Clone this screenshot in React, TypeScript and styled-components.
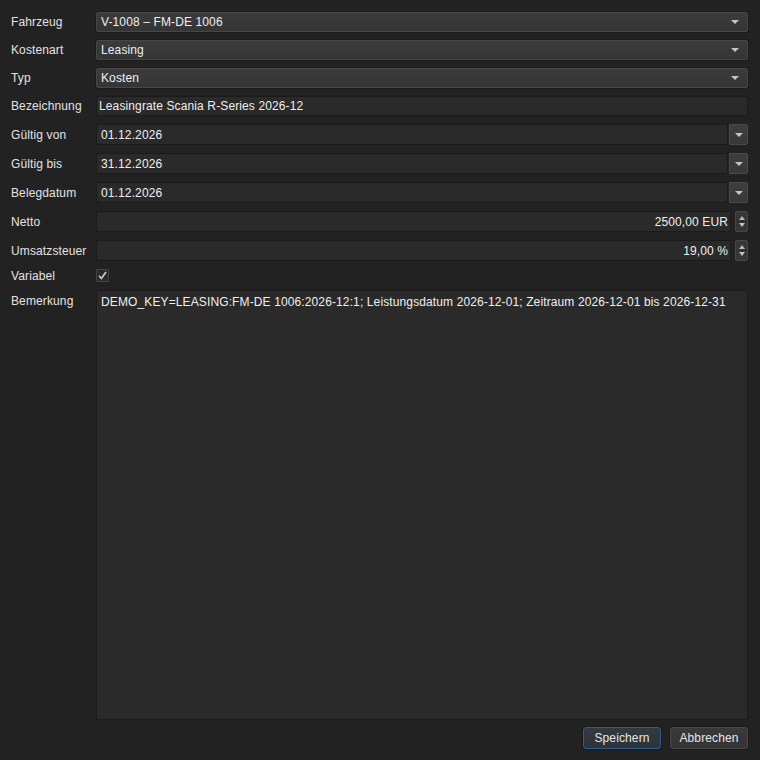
import * as React from 'react';
import styled, { createGlobalStyle, css } from 'styled-components';

const GlobalStyle = createGlobalStyle`
  html, body {
    margin: 0;
    padding: 0;
    background: #222222;
  }
  body {
    font-family: 'Liberation Sans', Arial, sans-serif;
    font-size: 12px;
    letter-spacing: 0.12px;
    color: #e4e4e4;
  }
`;

const Page = styled.div`
  box-sizing: border-box;
  width: 760px;
  height: 760px;
  padding: 12px 12px 11px 11px;
  display: flex;
  flex-direction: column;
  gap: 7px;
`;

const Form = styled.div`
  flex: 1;
  display: grid;
  grid-template-columns: 85px 1fr;
  grid-template-rows: 20px 20px 20px 20px 21px 21px 21px 21px 21px 13px 1fr;
  row-gap: 8px;
`;

const Label = styled.div<{ $top?: boolean }>`
  display: flex;
  align-items: ${p => (p.$top ? 'flex-start' : 'center')};
  padding-top: ${p => (p.$top ? '4px' : '0')};
  color: #e2e2e2;
  white-space: nowrap;
`;

const fieldBase = css`
  box-sizing: border-box;
  height: 100%;
  display: flex;
  align-items: center;
  border-radius: 2px;
  color: #efefef;
`;

const Combo = styled.div`
  ${fieldBase};
  padding: 0 8px 0 4px;
  background: linear-gradient(#3b3b3b, #353535);
  border: 1px solid #474747;
  box-shadow: 0 0 0 1px #1c1c1c;
  justify-content: space-between;
`;

const Arrow = styled.span<{ $up?: boolean; $w?: number; $h?: number }>`
  width: 0;
  height: 0;
  border-left: ${p => p.$w ?? 4}px solid transparent;
  border-right: ${p => p.$w ?? 4}px solid transparent;
  ${p =>
    p.$up
      ? css`border-bottom: ${p.$h ?? 4}px solid #b4b4b4;`
      : css`border-top: ${p.$h ?? 4}px solid #c4c4c4;`}
`;

const TextBox = styled.div<{ $right?: boolean }>`
  ${fieldBase};
  padding: 0 ${p => (p.$right ? '2px' : '2px')};
  justify-content: ${p => (p.$right ? 'flex-end' : 'flex-start')};
  background: #2a2a2a;
  border: 1px solid #1b1b1b;
  flex: 1;
`;

const Composite = styled.div`
  display: flex;
  height: 100%;
  gap: 1px;
`;

const DateText = styled(TextBox)`
  padding-left: 4px;
  border-radius: 2px 0 0 2px;
`;

const DateButton = styled.div`
  box-sizing: border-box;
  width: 19px;
  height: 100%;
  display: flex;
  align-items: center;
  justify-content: center;
  background: linear-gradient(#3e3e3e, #383838);
  border: 1px solid #4a4a4a;
  border-radius: 0 2px 2px 0;
`;

const SpinButtons = styled.div`
  box-sizing: border-box;
  width: 13px;
  margin-left: 3px;
  height: 100%;
  display: flex;
  flex-direction: column;
  align-items: center;
  justify-content: center;
  gap: 3px;
  background: #363636;
  border: 1px solid #474747;
  border-radius: 2px;
`;

const SpinDivider = styled.span`
  width: 9px;
  height: 1px;
  background: #2a2a2a;
  margin: -2px 0;
`;

const CheckBox = styled.div`
  box-sizing: border-box;
  width: 13px;
  height: 13px;
  display: flex;
  align-items: center;
  justify-content: center;
  background: #2a2a2a;
  border: 1px solid #444444;
  border-radius: 1px;
`;

const TextArea = styled.div`
  box-sizing: border-box;
  height: 100%;
  padding: 4px 4px;
  background: #2a2a2a;
  border: 1px solid #1b1b1b;
  color: #efefef;
  line-height: 14px;
`;

const Footer = styled.div`
  display: flex;
  justify-content: flex-end;
  gap: 9px;
  height: 22px;
`;

const Button = styled.button<{ $default?: boolean }>`
  box-sizing: border-box;
  height: 22px;
  padding: 0 8px;
  font-family: inherit;
  font-size: 12px;
  letter-spacing: 0.12px;
  color: #e6e6e6;
  border-radius: 3px;
  background: ${p => (p.$default ? 'linear-gradient(#323a42, #2c333a)' : 'linear-gradient(#3a3a3a, #333333)')};
  border: 1px solid ${p => (p.$default ? '#2f5f88' : '#4a4a4a')};
  box-shadow: 0 0 0 1px #1a1a1a;
  min-width: 78px;
`;

const ComboField = ({ value }: { value: string }) => (
  <Combo>
    <span>{value}</span>
    <Arrow />
  </Combo>
);

const DateField = ({ value }: { value: string }) => (
  <Composite>
    <DateText>{value}</DateText>
    <DateButton>
      <Arrow />
    </DateButton>
  </Composite>
);

const SpinField = ({ value }: { value: string }) => (
  <Composite>
    <TextBox $right>{value}</TextBox>
    <SpinButtons>
      <Arrow $up $w={3.5} $h={4} />
      <SpinDivider />
      <Arrow $w={3.5} $h={4} />
    </SpinButtons>
  </Composite>
);

const App = () => (
  <>
    <GlobalStyle />
    <Page>
      <Form>
        <Label>Fahrzeug</Label>
        <ComboField value="V-1008 – FM-DE 1006" />
        <Label>Kostenart</Label>
        <ComboField value="Leasing" />
        <Label>Typ</Label>
        <ComboField value="Kosten" />
        <Label>Bezeichnung</Label>
        <TextBox>Leasingrate Scania R-Series 2026-12</TextBox>
        <Label>Gültig von</Label>
        <DateField value="01.12.2026" />
        <Label>Gültig bis</Label>
        <DateField value="31.12.2026" />
        <Label>Belegdatum</Label>
        <DateField value="01.12.2026" />
        <Label>Netto</Label>
        <SpinField value="2500,00 EUR" />
        <Label>Umsatzsteuer</Label>
        <SpinField value="19,00 %" />
        <Label>Variabel</Label>
        <div>
          <CheckBox>
            <svg width="9" height="9" viewBox="0 0 9 9">
              <path d="M1 4.8 L3.4 7.5 L8 1" fill="none" stroke="#cfcfcf" strokeWidth="1.6" />
            </svg>
          </CheckBox>
        </div>
        <Label $top>Bemerkung</Label>
        <TextArea>
          DEMO_KEY=LEASING:FM-DE 1006:2026-12:1; Leistungsdatum 2026-12-01; Zeitraum 2026-12-01 bis 2026-12-31
        </TextArea>
      </Form>
      <Footer>
        <Button $default>Speichern</Button>
        <Button>Abbrechen</Button>
      </Footer>
    </Page>
  </>
);

export default App;
